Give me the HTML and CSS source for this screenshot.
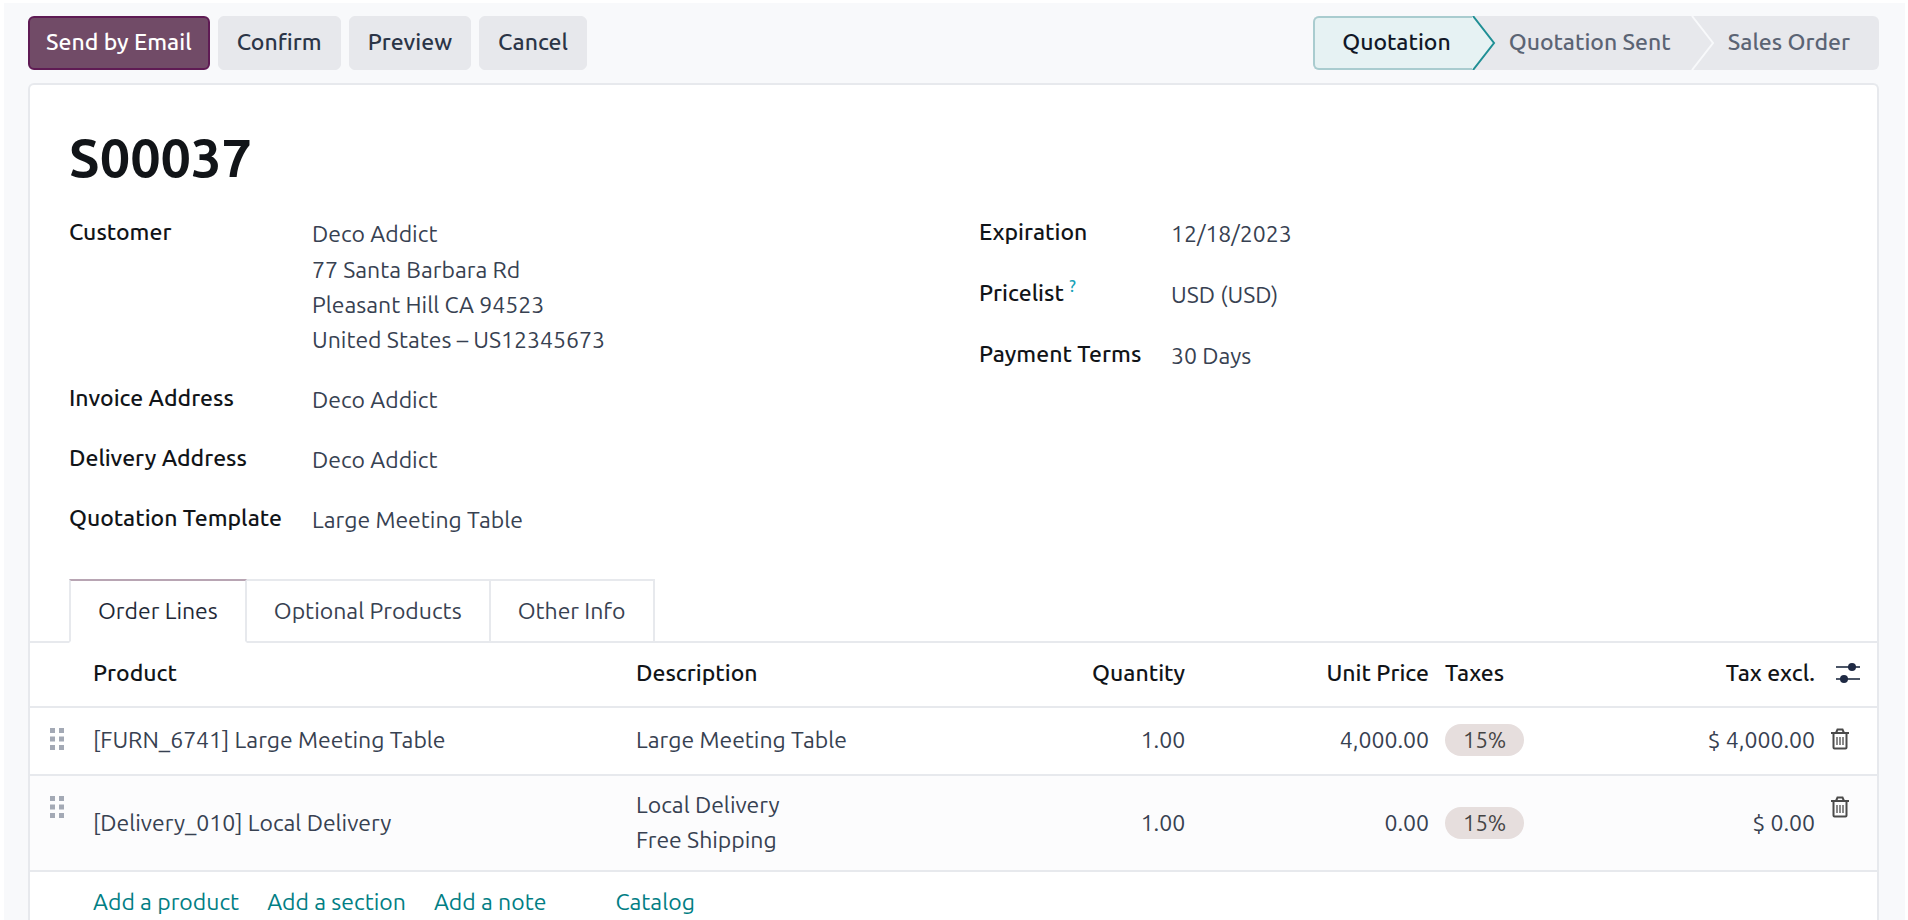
FILE: index.html
```
<!DOCTYPE html>
<html lang="en">

<head>
    <meta charset="UTF-8">
    <meta name="viewport" content="width=device-width, initial-scale=1.0">
    <title>S00037 - Quotation</title>
    <link rel="stylesheet" href="styles.css">
</head>

<body>
    <div class="page">
        <div class="control-bar">
            <div class="actions">
                <button class="btn btn-primary">Send by Email</button>
                <button class="btn">Confirm</button>
                <button class="btn">Preview</button>
                <button class="btn">Cancel</button>
            </div>

            <div class="statusbar">
                <button class="status status-active">Quotation</button>
                <svg class="arrow" viewBox="0 0 24 54" aria-hidden="true">
                    <path d="M0 0L22 27L0 54Z" fill="#e6f2f3" />
                    <path d="M1 0L22 27L1 54" fill="none" stroke="#1f8f95" stroke-width="2" />
                </svg>
                <button class="status status-sent">Quotation Sent</button>
                <svg class="arrow" viewBox="0 0 24 54" aria-hidden="true">
                    <path d="M1 0L22 27L1 54" fill="none" stroke="#f8f9fb" stroke-width="2" />
                </svg>
                <button class="status status-last">Sales Order</button>
            </div>
        </div>

        <div class="sheet">
            <h1>S00037</h1>

            <div class="groups">
                <dl class="group group-left">
                    <dt>Customer</dt>
                    <dd>
                        Deco Addict
                        <div class="address">
                            77 Santa Barbara Rd<br>
                            Pleasant Hill CA 94523<br>
                            United States – US12345673
                        </div>
                    </dd>
                    <dt>Invoice Address</dt>
                    <dd>Deco Addict</dd>
                    <dt>Delivery Address</dt>
                    <dd>Deco Addict</dd>
                    <dt>Quotation Template</dt>
                    <dd>Large Meeting Table</dd>
                </dl>
                <dl class="group group-right">
                    <dt>Expiration</dt>
                    <dd>12/18/2023</dd>
                    <dt>Pricelist <sup class="help">?</sup></dt>
                    <dd>USD (USD)</dd>
                    <dt>Payment Terms</dt>
                    <dd>30 Days</dd>
                </dl>
            </div>

            <div class="tabs" role="tablist">
                <button class="tab tab-active" role="tab" aria-selected="true">Order Lines</button>
                <button class="tab" role="tab" aria-selected="false">Optional Products</button>
                <button class="tab" role="tab" aria-selected="false">Other Info</button>
            </div>

            <table class="lines">
                <colgroup>
                    <col class="col-handle">
                    <col class="col-product">
                    <col class="col-description">
                    <col class="col-quantity">
                    <col class="col-price">
                    <col class="col-taxes">
                    <col class="col-total">
                    <col class="col-action">
                </colgroup>
                <thead>
                    <tr>
                        <th></th>
                        <th>Product</th>
                        <th>Description</th>
                        <th class="num">Quantity</th>
                        <th class="num">Unit Price</th>
                        <th>Taxes</th>
                        <th class="num">Tax excl.</th>
                        <th class="action">
                            <button class="icon-btn icon-settings" aria-label="Optional columns">
                                <svg width="24" height="22" viewBox="0 0 24 22">
                                    <path d="M0 5H24M0 17H24" stroke="#4b5566" stroke-width="2" />
                                    <circle cx="16" cy="5" r="4" fill="#1f2a44" />
                                    <circle cx="8" cy="17" r="4" fill="#1f2a44" />
                                </svg>
                            </button>
                        </th>
                    </tr>
                </thead>
                <tbody>
                    <tr>
                        <td class="handle">
                            <svg width="14" height="22" viewBox="0 0 14 22" fill="#a3a9b5">
                                <path d="M0 0h5v5H0zM9 0h5v5H9zM0 8.500h5v5H0zM9 8.500h5v5H9zM0 17h5v5H0zM9 17h5v5H9z" />
                            </svg>
                        </td>
                        <td>[FURN_6741] Large Meeting Table</td>
                        <td>Large Meeting Table</td>
                        <td class="num">1.00</td>
                        <td class="num">4,000.00</td>
                        <td><span class="badge">15%</span></td>
                        <td class="num">$ 4,000.00</td>
                        <td class="action">
                            <button class="icon-btn" aria-label="Delete row">
                                <svg width="18" height="22" viewBox="0 0 18 22" fill="none" stroke="#4a4a4a" stroke-width="2">
                                    <path d="M0 5H18M5 5L6.500 1.500H11.500L13 5M2.500 5V19.500Q2.500 20.500 3.500 20.500H14.500Q15.500 20.500 15.500 19.500V5" />
                                    <path d="M6 9V17M9 9V17M12 9V17" stroke="#888" />
                                </svg>
                            </button>
                        </td>
                    </tr>
                    <tr class="striped">
                        <td class="handle">
                            <svg width="14" height="22" viewBox="0 0 14 22" fill="#a3a9b5">
                                <path d="M0 0h5v5H0zM9 0h5v5H9zM0 8.500h5v5H0zM9 8.500h5v5H9zM0 17h5v5H0zM9 17h5v5H9z" />
                            </svg>
                        </td>
                        <td>[Delivery_010] Local Delivery</td>
                        <td>Local Delivery<br>Free Shipping</td>
                        <td class="num">1.00</td>
                        <td class="num">0.00</td>
                        <td><span class="badge">15%</span></td>
                        <td class="num">$ 0.00</td>
                        <td class="action">
                            <button class="icon-btn" aria-label="Delete row">
                                <svg width="18" height="22" viewBox="0 0 18 22" fill="none" stroke="#4a4a4a" stroke-width="2">
                                    <path d="M0 5H18M5 5L6.500 1.500H11.500L13 5M2.500 5V19.500Q2.500 20.500 3.500 20.500H14.500Q15.500 20.500 15.500 19.500V5" />
                                    <path d="M6 9V17M9 9V17M12 9V17" stroke="#888" />
                                </svg>
                            </button>
                        </td>
                    </tr>
                </tbody>
            </table>

            <div class="add-links">
                <a href="#">Add a product</a>
                <a href="#">Add a section</a>
                <a href="#">Add a note</a>
                <a href="#" class="catalog">Catalog</a>
            </div>
        </div>
    </div>
</body>

</html>
```
FILE: styles.css
```
* {
    box-sizing: border-box;
}

body {
    font-family: Ubuntu, "Noto Sans", sans-serif;
    font-size: 23px;
    line-height: 35px;
    margin: 0;
    color: #374151;
    background-color: #fff;
}

button {
    font-family: inherit;
    font-size: inherit;
    line-height: inherit;
    cursor: pointer;
}

.page {
    display: flex;
    flex-direction: column;
    min-height: 100vh;
    padding: 13px 26px 0 24px;
    background-color: #f8f9fb;
    border: solid #fff;
    border-width: 3px 3px 0 4px;
}

/* Top bar */
.control-bar {
    display: flex;
    justify-content: space-between;
    margin-bottom: 13px;
}

.actions {
    display: flex;
    gap: 8px;
}

.btn {
    height: 54px;
    padding: 0 18px 4px;
    border: 1px solid #e7e8ec;
    border-radius: 6px;
    background-color: #e7e8ec;
    color: #2b3547;
    font-weight: 500;
}

.btn-primary {
    padding: 0 16px 4px;
    background-color: #714b67;
    border: 2px solid #5f1b54;
    color: #fff;
}

.statusbar {
    display: flex;
    height: 54px;
    background-color: #e7e8ec;
    border-radius: 6px;
}

.status {
    border: none;
    background: none;
    color: #5b6474;
    font-weight: 500;
    padding: 0 13px 4px;
}

.status-active {
    padding: 0 21px 4px 27px;
    background-color: #e6f2f3;
    border: 2px solid #a9cccf;
    border-right: none;
    border-radius: 6px 0 0 6px;
    color: #111827;
}

.status-sent {
    padding-right: 20px;
}

.status-last {
    padding-right: 29px;
}

.arrow {
    width: 24px;
    height: 54px;
}

/* Form sheet */
.sheet {
    flex: 1;
    background-color: #fff;
    border: 2px solid #e7e9ed;
    border-bottom: none;
    border-radius: 6px 6px 0 0;
}

h1 {
    margin: 40px 39px 27px;
    font-size: 54px;
    line-height: 64px;
    font-weight: 600;
    color: #111418;
}

.groups {
    display: grid;
    grid-template-columns: 911fr 860fr;
    padding: 0 39px;
}

.group {
    display: grid;
    align-content: start;
    margin: 0;
}

.group-left {
    grid-template-columns: 243px 1fr;
    row-gap: 25px;
}

.group-right {
    grid-template-columns: 192px 1fr;
    row-gap: 26px;
}

dt {
    color: #111418;
    font-weight: 500;
    line-height: 31px;
}

dd {
    margin: 0;
}

.address {
    margin-top: 1px;
}

.help {
    font-size: 16px;
    line-height: 0;
    color: #17a2b8;
}

/* Notebook */
.tabs {
    display: flex;
    margin-top: 42px;
    padding-left: 39px;
    border-bottom: 2px solid #e7e9ed;
}

.tab {
    height: 64px;
    margin-bottom: -2px;
    padding: 0 27px 2px;
    border: 2px solid #e7e9ed;
    border-left: none;
    background-color: #fff;
    color: #374151;
}

.tab-active {
    border-left: 2px solid #e7e9ed;
    border-top-color: #b8a5b3;
    border-bottom-color: #fff;
    color: #1f2937;
}

.lines {
    width: 100%;
    table-layout: fixed;
    border-collapse: collapse;
}

.col-handle {
    width: 55px;
}

.col-product {
    width: 29.4%;
}

.col-quantity {
    width: 10%;
}

.col-price {
    width: 13.2%;
}

.col-taxes {
    width: 10%;
}

.col-total {
    width: 10.9%;
}

.col-action {
    width: 54px;
}

th,
td {
    height: 68px;
    padding: 13px 8px 17px;
    border-bottom: 2px solid #e7e9ed;
    text-align: left;
    vertical-align: middle;
}

th {
    height: 64px;
    padding: 11px 8px 15px;
    color: #111418;
    font-weight: 500;
}

.striped td {
    height: 96px;
    padding-top: 11px;
    padding-bottom: 13px;
}

.striped {
    background-color: #fcfcfd;
}

.num {
    text-align: right;
}

td.handle,
td.action,
.striped td.handle,
.striped td.action {
    padding-top: 20px;
    padding-bottom: 0;
    vertical-align: top;
    line-height: 0;
}

td.handle {
    padding-left: 20px;
}

.icon-btn {
    display: block;
    padding: 0;
    border: none;
    background: none;
    line-height: 0;
}

.icon-settings {
    margin-left: 5px;
}

.badge {
    display: inline-block;
    padding: 0 18px;
    border-radius: 16px;
    background-color: #e6dedd;
    color: #444;
    font-size: 22px;
    line-height: 32px;
}

.add-links {
    display: flex;
    gap: 28px;
    padding: 12px 63px 0;
}

a {
    color: #017e84;
    text-decoration: none;
}

.catalog {
    margin-left: 41px;
}
```
